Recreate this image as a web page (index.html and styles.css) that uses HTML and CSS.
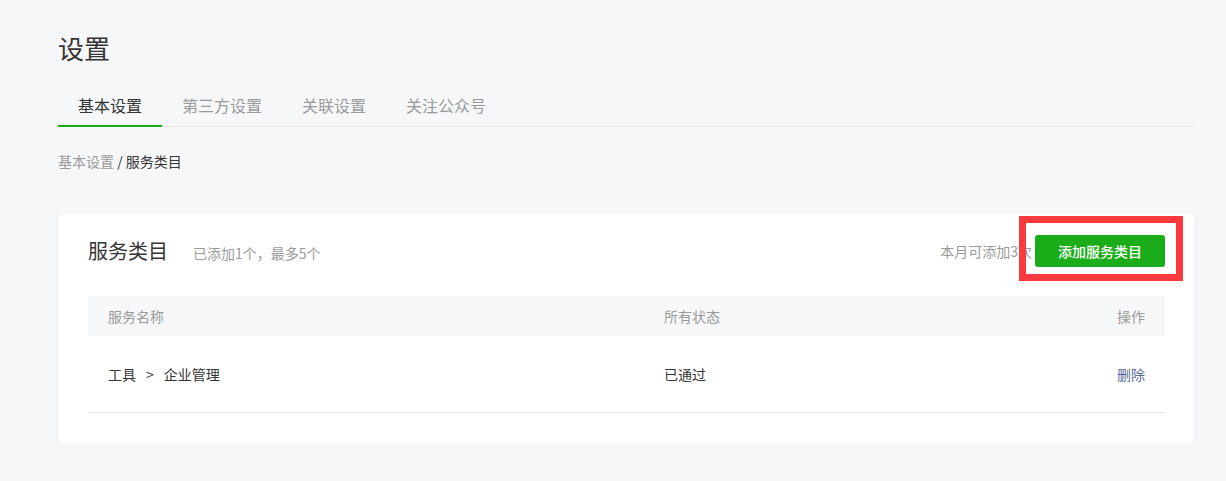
FILE: index.html
```html
<!DOCTYPE html>
<html lang="zh-CN">
<head>
    <meta charset="UTF-8" />
    <meta name="viewport" content="width=device-width, initial-scale=1.0"/>
    <title>设置</title>
    <link rel="stylesheet" href="styles.css">
</head>
<body>

    <div class="page">
        <h1 class="page-title">设置</h1>

        <ul class="tabs">
            <li class="tab active">基本设置</li>
            <li class="tab">第三方设置</li>
            <li class="tab">关联设置</li>
            <li class="tab">关注公众号</li>
        </ul>

        <div class="breadcrumb">
            <span class="crumb-link">基本设置</span> / <span class="crumb-current">服务类目</span>
        </div>

        <div class="card">
            <div class="card-header">
                <h2 class="card-title">服务类目</h2>
                <span class="card-desc">已添加1个，最多5个</span>
                <span class="card-tip">本月可添加3次</span>
                <button class="add-btn">添加服务类目</button>
            </div>

            <table class="service-table">
                <thead>
                    <tr>
                        <th class="col-name">服务名称</th>
                        <th class="col-status">所有状态</th>
                        <th class="col-op">操作</th>
                    </tr>
                </thead>
                <tbody>
                    <tr>
                        <td class="col-name">工具<span class="sep">&gt;</span>企业管理</td>
                        <td class="col-status">已通过</td>
                        <td class="col-op"><a href="#" class="del-link">删除</a></td>
                    </tr>
                </tbody>
            </table>

            <div class="highlight-box"></div>
        </div>
    </div>

</body>
</html>
```

FILE: styles.css
```css
body {
    margin: 0;
    padding: 0;
    background-color: #f6f7f9;
    font-family: "Noto Sans CJK SC", "Liberation Sans", sans-serif;
    color: #353535;
}

.page {
    padding: 30px 31px 0 58px;
}

.page-title {
    margin: 0;
    font-size: 26px;
    line-height: 36px;
    font-weight: normal;
    color: #353535;
}

.tabs {
    list-style: none;
    margin: 18px 0 0;
    padding: 0;
    display: flex;
    border-bottom: 1px solid #e5e5e5;
}

.tab {
    padding: 9px 20px 8px;
    font-size: 16px;
    line-height: 24px;
    color: #9a9a9a;
    border-bottom: 2px solid transparent;
    margin-bottom: -1px;
    cursor: pointer;
}

.tab.active {
    color: #353535;
    border-bottom-color: #1aad19;
}

.breadcrumb {
    margin-top: 24px;
    font-size: 14px;
    line-height: 20px;
    color: #353535;
}

.crumb-link {
    color: #9a9a9a;
}

.card {
    position: relative;
    margin-top: 43px;
    background-color: #fff;
    border-radius: 4px;
    box-shadow: 0 1px 3px rgba(0, 0, 0, 0.08);
    padding: 0 30px 30px 30px;
}

.card-header {
    display: flex;
    align-items: center;
    padding: 21px 0 29px;
}

.card-title {
    margin: 0;
    font-size: 20px;
    line-height: 32px;
    font-weight: normal;
    color: #353535;
}

.card-desc {
    margin-left: 25px;
    font-size: 14px;
    color: #9a9a9a;
    padding-top: 3px;
}

.card-tip {
    margin-left: auto;
    margin-right: 3px;
    font-size: 14px;
    color: #9a9a9a;
}

.add-btn {
    width: 130px;
    height: 32px;
    border: none;
    border-radius: 3px;
    background-color: #1aad19;
    color: #fff;
    font-family: inherit;
    font-size: 14px;
    font-weight: 500;
    cursor: pointer;
}

.service-table {
    width: 100%;
    border-collapse: collapse;
    font-size: 14px;
}

.service-table th {
    height: 40px;
    padding: 0 20px;
    background-color: #f6f7f9;
    color: #9a9a9a;
    font-weight: normal;
    text-align: left;
}

.service-table td {
    height: 76px;
    padding: 0 20px;
    border-bottom: 1px solid #e5e5e5;
    color: #353535;
}

.col-name {
    width: 516px;
}

.sep {
    margin: 0 10px;
}

.service-table .col-op {
    text-align: right;
}

.service-table .del-link {
    color: #576b95;
    text-decoration: none;
}

/* annotation frame over the add button */
.highlight-box {
    position: absolute;
    top: 2px;
    right: 12px;
    width: 164px;
    height: 65px;
    box-sizing: border-box;
    border: 7px solid #fa3a3c;
}
```
